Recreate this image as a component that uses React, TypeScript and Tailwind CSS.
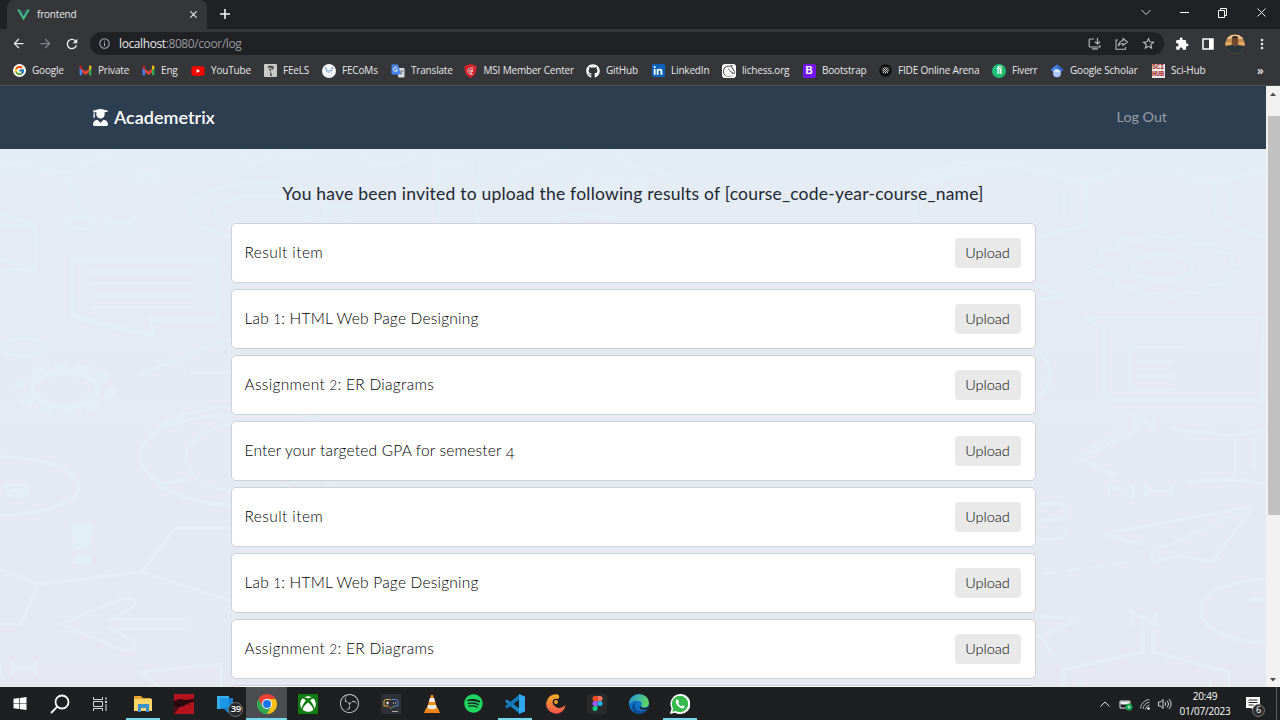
import type { ReactNode } from "react";
import { FaUserGraduate, FaYoutube, FaGithub, FaLinkedinIn, FaXbox, FaSpotify } from "react-icons/fa";
import { FcGoogle } from "react-icons/fc";
import { SiLichess, SiObsstudio } from "react-icons/si";
import { MdExtension, MdStarBorder, MdMoreVert, MdArrowBack, MdArrowForward, MdRefresh } from "react-icons/md";

const Gmail = () => (
  <svg viewBox="1 3 22 18" className="h-[11px] w-[13px]">
    <path d="M2 20V6l4 3v11z" fill="#4285f4" />
    <path d="M18 20V9l4-3v14z" fill="#34a853" />
    <path d="M6 9v6l6 4.500 6-4.500V9l-6 4.500z" fill="#ea4335" />
    <path d="M2 6c0-3 3-3 4-2v7L2 8z" fill="#c5221f" />
    <path d="M22 6c0-3-3-3-4-2v7l4-3z" fill="#fbbc04" />
  </svg>
);

const Feels = () => (
  <svg viewBox="0 0 13 13" className="h-[13px] w-[13px]">
    <rect width="13" height="13" rx="1" fill="#c9c9c7" />
    <path d="M3 3l3-1.500 4 1-1 3-2 .5v2l1 4H6L6.500 7l-2-2z" fill="#4b4b4b" />
    <path d="M2 3l3 2M5 4l3 1" stroke="#eee" strokeWidth=".8" />
  </svg>
);

const Fecoms = () => (
  <svg viewBox="0 0 14 14" className="h-3.5 w-3.5">
    <circle cx="7" cy="7" r="7" fill="#f4f7fc" />
    <path d="M3 3.800l1.500 1M11 3.800l-1.500 1M4 7l1.500-1M10 7L8.500 6" stroke="#4e7fc4" strokeWidth="1.200" />
    <circle cx="7" cy="7.500" r="1.800" fill="#b9cdea" />
  </svg>
);

const Translate = () => (
  <svg viewBox="0 0 14 14" className="h-3.5 w-3.5">
    <path d="M5 4h7.500a1 1 0 011 1v7.500a1 1 0 01-1 1H7.500z" fill="#dadce0" />
    <path d="M1.500.5H7l3 10H1.500a1 1 0 01-1-1v-8a1 1 0 011-1z" fill="#4a84ee" />
    <path d="M6.200 4.200A2 2 0 106.500 6H4.800" stroke="#fff" fill="none" strokeWidth=".9" />
    <path d="M9 7h3.500M11 6v1c0 1-1 2.500-2 3m.5-2l2.500 2.500" stroke="#6b7076" fill="none" strokeWidth=".8" />
  </svg>
);

const Msi = () => (
  <svg viewBox="0 0 13 14" className="h-3.5 w-[13px]">
    <path d="M6.500 0L12.500 2c0 6-1 9-6 12C1.500 11 .5 8 .5 2z" fill="#d5262f" />
    <path d="M9 3.500L5 4.500 3.500 7 5 9.500l3.500 1-2-2L9 7H5.500L9 5.500" fill="none" stroke="#f7dada" strokeWidth=".9" />
  </svg>
);

const LinkedIn = () => (
  <span className="flex h-[13px] w-[13px] items-center justify-center rounded-[1px] bg-[#0a62b8] text-[10px] text-white">
    <FaLinkedinIn />
  </span>
);

const Lichess = () => (
  <span className="flex h-3.5 w-3.5 items-center justify-center rounded-[3px] bg-white text-[12px] text-[#222]">
    <SiLichess />
  </span>
);

const Bootstrap = () => (
  <span className="flex h-3.5 w-[13px] items-center justify-center rounded-[2px] bg-[#7216f4] font-['Liberation_Sans',sans-serif] text-[10px] leading-none font-bold text-white">
    B
  </span>
);

const Fide = () => (
  <svg viewBox="0 0 14 14" className="h-[13px] w-[13px]">
    <circle cx="7" cy="7" r="6.800" fill="#101010" />
    <path d="M4 4l6 6M10 4l-6 6M6 3.500L10.500 8M3.500 6L8 10.500M8 3.500L3.500 8M10.500 6L6 10.500" stroke="#f2f2f2" strokeWidth="1" strokeDasharray="1.600 .6" />
  </svg>
);

const Fiverr = () => (
  <span className="flex h-3.5 w-3.5 items-center justify-center rounded-full bg-[#1dbf73] font-['Liberation_Sans',sans-serif] text-[10px] leading-none font-bold tracking-[-0.5px] text-white">
    fi
  </span>
);

const Scholar = () => (
  <svg viewBox="0 0 14 14" className="h-3.5 w-3.5">
    <path d="M7 .5l6.500 5.200L7 11 .5 5.700z" fill="#4a86ee" />
    <path d="M7 .5l6.500 5.200L7 11z" fill="#3569c8" />
    <circle cx="7" cy="9.200" r="4" fill="#a9c8fb" />
    <path d="M3.400 7.800a4 4 0 017.200 0z" fill="#e8f0fe" />
  </svg>
);

const SciHub = () => (
  <span className="flex h-3.5 w-[13px] flex-col items-center justify-center bg-[#f3e6e6] font-['Liberation_Mono',monospace] text-[7px] leading-[7px] font-bold text-[#a02a2a]">
    <span>SCI</span>
    <span>HUB</span>
  </span>
);

const bookmarks: { name: string; width: string; icon: ReactNode }[] = [
  { name: "Google", width: "w-[66px]", icon: <span className="rounded-full bg-white p-px"><FcGoogle className="h-[11px] w-[11px]" /></span> },
  { name: "Private", width: "w-[63px]", icon: <Gmail /> },
  { name: "Eng", width: "w-[50px]", icon: <Gmail /> },
  { name: "YouTube", width: "w-[72px]", icon: <FaYoutube className="h-3.5 w-3.5 text-[#ff0000] [background:linear-gradient(#fff,#fff)_center/5px_5px_no-repeat]" /> },
  { name: "FEeLS", width: "w-[59px]", icon: <Feels /> },
  { name: "FECoMs", width: "w-[69px]", icon: <Fecoms /> },
  { name: "Translate", width: "w-[72.500px]", icon: <Translate /> },
  { name: "MSI Member Center", width: "w-[122.500px]", icon: <Msi /> },
  { name: "GitHub", width: "w-[65px]", icon: <FaGithub className="h-3.5 w-3.5 text-white" /> },
  { name: "LinkedIn", width: "w-[71px]", icon: <LinkedIn /> },
  { name: "lichess.org", width: "w-[80px]", icon: <Lichess /> },
  { name: "Bootstrap", width: "w-[76px]", icon: <Bootstrap /> },
  { name: "FIDE Online Arena", width: "w-[114px]", icon: <Fide /> },
  { name: "Fiverr", width: "w-[58px]", icon: <Fiverr /> },
  { name: "Google Scholar", width: "w-[101px]", icon: <Scholar /> },
  { name: "Sci-Hub", width: "w-[106px]", icon: <SciHub /> },
];

function TabStrip() {
  return (
    <div className="flex h-[29px] items-stretch bg-[#202124] text-[#e8eaed]">
      <div className="ml-[7px] flex w-[200px] items-center rounded-t-[7px] bg-[#35363a] pl-2.5">
        <svg viewBox="0 0 14 12" className="h-3 w-[13px]">
          <path d="M0 0h3l4 7 4-7h3L7 12z" fill="#41b883" />
          <path d="M3 0h2.500L7 2.700 8.500 0H11L7 7z" fill="#35495e" />
        </svg>
        <span className="ml-[7px] text-[10px] tracking-[-0.2px]">frontend</span>
        <svg viewBox="0 0 8 8" className="mr-2.5 ml-auto h-[7px] w-[7px]" stroke="#f1f3f4" strokeWidth="1.200">
          <path d="M.5.5l7 7M7.500.5l-7 7" />
        </svg>
      </div>
      <svg viewBox="0 0 10 10" className="mb-px ml-[13px] h-2.5 w-2.5 self-center" stroke="#f1f3f4" strokeWidth="1.600">
        <path d="M5 0v10M0 5h10" />
      </svg>
      <svg viewBox="0 0 128 12" className="mr-3.5 mb-[5px] ml-auto h-3 w-32 self-center" fill="none" stroke="#e8eaed">
        <path d="M3.500 4L8 8.500 12.500 4" strokeWidth=".9" />
        <path d="M42 6.500h9" stroke="#fff" />
        <path d="M80.500 4.500h6v7h-6zM82.500 4.500v-2h6v7h-2" stroke="#fff" />
        <path d="M119.500 2.500l8 8M127.500 2.500l-8 8" />
      </svg>
    </div>
  );
}

function Toolbar() {
  return (
    <div className="flex h-[29px] items-center bg-[#35363a] text-[#e8eaed]">
      <MdArrowBack className="ml-[11px] h-[15px] w-[15px]" />
      <MdArrowForward className="ml-[12px] h-[15px] w-[15px] text-[#83858a]" />
      <MdRefresh className="ml-[11px] h-4 w-4" />
      <div className="ml-[10px] flex h-[23px] w-[1074px] items-center rounded-full bg-[#202124] pr-2 pl-[9px]">
        <svg viewBox="0 0 12 12" className="h-[11px] w-[11px]" fill="none" stroke="#a9adb2">
          <circle cx="6" cy="6" r="5.200" strokeWidth="1.100" />
          <path d="M6 5.300v3.500M6 3v1.200" strokeWidth="1.200" />
        </svg>
        <span className="ml-[9px] text-[12px] tracking-[-0.4px] text-[#989ba0]">
          <span className="text-[#e8eaed]">localhost</span>:8080/coor/log
        </span>
        <svg viewBox="0 0 14 12" className="ml-auto h-3 w-[14px]" fill="none" stroke="#b4b7bb" strokeWidth="1.200">
          <path d="M6 1H2.200a1 1 0 00-1 1v6a1 1 0 001 1H12V7M9.500 0v6M7 3.700L9.500 6 12 3.700M4 10.800h6" />
        </svg>
        <svg viewBox="0 0 14 13" className="ml-[13px] h-[13px] w-[14px]" fill="none" stroke="#b4b7bb" strokeWidth="1.100">
          <path d="M3 3H1v9.300h9.500V10M8 1.500L12.500 5 8 8.500V6.500C5.500 6.500 4 7.500 3.300 9 3.500 6 5 4 8 3.700z" />
        </svg>
        <MdStarBorder className="ml-[12px] h-[15px] w-[15px] text-[#c8cacd]" />
      </div>
      <MdExtension className="ml-[11px] h-[14px] w-[14px] text-white" />
      <svg viewBox="0 0 12 12" className="ml-[13px] h-3 w-3">
        <path d="M1 1h10v10H1z" fill="none" stroke="#fff" strokeWidth="1.500" />
        <path d="M7 1h4v10H7z" fill="#fff" />
      </svg>
      <svg viewBox="0 0 20 20" className="ml-[11px] h-5 w-5">
        <defs>
          <clipPath id="avatar"><circle cx="10" cy="10" r="9.700" /></clipPath>
        </defs>
        <g clipPath="url(#avatar)">
          <path d="M0 0h20v20H0z" fill="#c28a55" />
          <path d="M0 1h20v4H0z" fill="#eac38c" />
          <path d="M0 8h6v4H0zM14 8h6v4h-6z" fill="#e9a95b" />
          <path d="M0 12l7-1h6l7 1v8H0z" fill="#26363a" />
          <path d="M7 5c0-3 6-3 6 0v5l-3 3-3-3z" fill="#70462c" />
          <path d="M6.500 5c0-4 7-4 7 0l-1-1h-5z" fill="#2b211c" />
        </g>
      </svg>
      <MdMoreVert className="ml-[9px] h-4 w-4" />
    </div>
  );
}

function Bookmarks() {
  return (
    <div className="flex h-7 items-center border-b border-[#4c4f54] bg-[#35363a] pb-[2px] pl-3 text-[10px] tracking-[-0.18px] text-[#e8eaed]">
      {bookmarks.map((b) => (
        <div key={b.name} className={"flex shrink-0 items-center whitespace-nowrap " + b.width}>
          <span className="mr-1.5 flex w-3.5 shrink-0 justify-center">{b.icon}</span>
          {b.name}
        </div>
      ))}
      <span className="text-[12px] leading-none font-semibold">»</span>
    </div>
  );
}

function Doodles() {
  return (
    <svg viewBox="0 149 1266 538" className="absolute inset-0 h-full w-full" fill="none" stroke="#e3eef5" strokeWidth="3.500">
      <path d="M0 162l65 11 52-24M66 176l16 36M0 214l35 12v44H0M0 226h35M0 258l35 12" />
      <g strokeWidth="4">
        <ellipse cx="80" cy="223" rx="14" ry="6.500" />
        <path d="M108 216v14M134 216v14M108 223h26" />
        <ellipse cx="255" cy="154" rx="14" ry="7" />
        <path d="M284 149v13M309 149v13M284 155h25" />
        <path d="M1109 497v-12l24 12v-12M1146 485v12M1172 485v12M1146 491h26" />
        <path d="M1134 430v-14l20 14v-14M1132 625v-13l24 13v-13" />
        <path d="M12 662v13M36 662v13M12 668h24M0 662v13" />
        <path d="M561 177v12M561 171v3M588 178c-14-4-14 11 0 9M589 170v19M601 182h20c0-6-18-7-19 1 0 7 14 6 18 4M646 178v11M645 182c-16-7-18 8-1 5" />
        <path d="M27 486v10M2 487c16-4 25-2 25 2M26 491c-10-2-18-1-18 2s12 4 18 0M1250 600c12-3 16 0 16 2" />
      </g>
      <path d="M136 168l28 15M164 168l-32 15" />
      <ellipse cx="260" cy="211" rx="70" ry="28" />
      <ellipse cx="262" cy="213" rx="47" ry="17" />
      <path d="M325 224v-17h24v17" />
      <path d="M72 260h146v60h-67l2 15-27-5-53-14z" strokeWidth="5" />
      <path d="M90 272h104M90 283h104M96 296h98M90 307h104" />
      <ellipse cx="24" cy="347" rx="22" ry="9" />
      <ellipse cx="65" cy="389" rx="33" ry="17" strokeWidth="6" />
      <ellipse cx="65" cy="389" rx="46" ry="22" strokeWidth="8" strokeDasharray="12 10" />
      <path d="M140 375l90-37M190 373h40M150 433c30-14 55-17 85-19" />
      <ellipse cx="245" cy="456" rx="104" ry="50" />
      <ellipse cx="248" cy="458" rx="62" ry="35" />
      <path d="M157 485l32-6" />
      <ellipse cx="0" cy="486" rx="79" ry="29" />
      <path d="M70 524h23l-4 26H75zM74 556h16v8H74z" fill="#e2eff6" stroke="none" />
      <path d="M0 570l38 14-17 40H0M38 584l104-12 33-44h60M142 572l92 30v80" stroke="#e6edf5" />
      <path d="M61 624l55-23c12-6 26 0 16 6l-20 12h74c5 0 5 10 0 10h-74l19 12c12 7-1 13-13 7z" strokeWidth="3" stroke="#e6edf5" />
      <path d="M140 671l81-6v22M140 671l20 16" stroke="#e6edf5" />
      <path d="M361 149c4 21 50 20 54 0M439 149v18h25M439 164v59M480 149l-3 75M512 185c-8-18 15-22 35-25 30-25 80-15 83 8 25-2 50 6 43 23M550 222l20-8 48 4" />
      <path d="M915 223v-41l81-22 90 23v42l-53 13M1086 182l36-11M1170 171l42 12 54-13M1215 184v35l51 19M1064 188v33M1231 186v29M915 176l65-17M930 182l65-17" />
      <path d="M1090 267l12-8-2-10 17-1 5-10 18 3 12-7 17 5 15-4 10 9 19-1 5 9 17 1-4 9 11 7-14 5v10l-18 1-6 9-18-2-12 6-14-5-17 3-7-8-20-2 1-10-17-4z" strokeWidth="3" />
      <ellipse cx="1162" cy="267" rx="30" ry="13" />
      <path d="M1085 318h178v77c0 3-4 5-8 5h-136c-10 0-15-5-15-10v-60zM1130 390v-43h54M1136 362h37M1136 376h37M1130 390h45" />
      <path d="M1035 284l29 12-29 4M1035 350c20 10 20 38 0 48" />
      <g stroke="#e5edf5">
        <path d="M1140 428l-60 30 37 18M1080 455l40-24M1170 429l65 7 31-7M1235 438v41l-48 3M1235 479l31 5M1254 440v28" />
        <path d="M1104 534l150-28-42 56-33-7-24 7c-10-8 2-16 18-18l81-38M1104 534l40 11" strokeWidth="3" />
        <path d="M1043 574l90-13" strokeWidth="3" strokeDasharray="14 10" />
        <path d="M1035 506c20-5 32-4 32 8 0 8-20 4-32 8M1067 530c0 12-20 10-32 8" />
        <ellipse cx="1270" cy="611" rx="69" ry="32" />
        <path d="M1035 616l45 3-40 17 14 20M1063 687v-17l80-18v-22M1153 630v22l76 20v15M1080 687v-6M1210 687v-7" />
      </g>
    </svg>
  );
}

const SmallDigit = ({ children }: { children: string }) => <span className="text-[13px] leading-none">{children}</span>;

const labels: Record<string, ReactNode> = {
  result: <span className="tracking-[0.4px]">Result item</span>,
  lab: <span className="tracking-[0.21px]">Lab <SmallDigit>1</SmallDigit>: HTML Web Page Designing</span>,
  assignment: <span className="tracking-[0.3px]">Assignment <SmallDigit>2</SmallDigit>: ER Diagrams</span>,
  gpa: <span className="tracking-[0.18px]">Enter your targeted GPA for semester <span className="inline-block translate-y-[3px] leading-none">4</span></span>,
};

const rows = ["result", "lab", "assignment", "gpa", "result", "lab", "assignment"];

function Page() {
  return (
    <div className="flex h-[601px]">
      <main className="flex w-[1266px] flex-col overflow-hidden font-['Lato','Liberation_Sans',sans-serif]">
        <header className="flex h-[63px] shrink-0 items-center justify-between bg-[#2d3e50] pr-[99px] pb-px pl-[92px]">
          <div className="flex items-center gap-[5px] text-white">
            <FaUserGraduate className="h-[17px] w-[17px]" />
            <span className="text-[18px] font-semibold">Academetrix</span>
          </div>
          <span className="text-[14.300px] text-[#989fa6]">Log Out</span>
        </header>
        <div className="relative flex min-h-0 grow flex-col items-center overflow-hidden bg-linear-to-b from-[#e4ecf4] to-[#e5e8f1]">
          <Doodles />
          <h1 className="relative mt-[33px] h-[41px] shrink-0 text-[17.500px] leading-6 tracking-[0.21px] whitespace-nowrap text-[#212832]">
            You have been invited to upload the following results of [course_code-year-course_name]
          </h1>
          <div className="relative flex w-[805px] shrink-0 flex-col gap-1.5">
            {rows.map((row, i) => (
              <section key={i} className="flex h-[60px] shrink-0 items-center justify-between rounded-[5px] border border-[#cdd2d8] bg-white pr-3.5 pl-[13px] text-[15.500px] font-light text-black">
                <div className="pb-px">{labels[row]}</div>
                <button className="flex h-[30px] w-[66px] items-center justify-center rounded-[4px] bg-[#e9e9e9] text-[14.500px]">Upload</button>
              </section>
            ))}
            <div className="h-[60px] shrink-0 rounded-[5px] border border-[#cdd2d8] bg-white" />
          </div>
        </div>
      </main>
      <div className="flex w-3.5 flex-col items-center bg-[#f1f1f1]">
        <svg viewBox="0 0 14 30" className="h-[30px] w-3.5"><path d="M4 10h6L7 6.500z" fill="#505050" /></svg>
        <div className="h-[399px] w-3 self-end bg-[#c1c1c1]" />
        <svg viewBox="0 0 14 12" className="mt-auto h-3 w-3.5"><path d="M4 3h6L7 6.500z" fill="#505050" /></svg>
      </div>
    </div>
  );
}

const Explorer = () => (
  <svg viewBox="0 0 20 18" className="h-[18px] w-5">
    <path d="M1 1h7l2 2h8v4H1z" fill="#e5a52c" />
    <path d="M1 4h18v12H1z" fill="#fcd667" />
    <path d="M5 17V9h11v8h-3v-4H8v4z" fill="#3d8fd1" />
  </svg>
);

const Dragon = () => (
  <svg viewBox="0 0 20 20" className="h-5 w-5">
    <path d="M0 0h20v20H0z" fill="#b5121f" />
    <path d="M0 7l6-2 6 1 8-1v3l-6 1 3 2-4-1-3 2-5 1-5 5z" fill="#260a10" />
    <path d="M0 12l6 1-6 7z" fill="#4f0f1b" />
  </svg>
);

const Phone = () => (
  <span className="relative">
    <svg viewBox="0 0 18 18" className="h-[18px] w-[18px]">
      <path d="M1 1h12v13H1z" fill="#36b0ec" />
      <path d="M4 3h13v11l-5 4-4-4H4z" fill="#147fd0" />
      <path d="M4 3h9v10H4z" fill="#1c97e3" />
    </svg>
    <span className="absolute top-[7px] left-[12px] flex h-[15px] w-[15px] items-center justify-center rounded-full border border-[#777] bg-[#24282b] text-[9.500px] font-semibold tracking-[-0.3px] text-white">39</span>
  </span>
);

const Chrome = () => (
  <svg viewBox="0 0 20 20" className="h-5 w-5">
    <path d="M10 10L1.340 5A10 10 0 0118.660 5z" fill="#ea4335" />
    <path d="M10 10l8.660-5A10 10 0 0110 20z" fill="#fbc116" />
    <path d="M10 10v10A10 10 0 011.340 5z" fill="#34a853" />
    <path d="M10 5h8.660L14 12.500z" fill="#fbc116" />
    <path d="M14.300 12.500L10 20l-3-6z" fill="#34a853" />
    <path d="M1.340 5l4.300 7.500L10 5z" fill="#ea4335" />
    <path d="M1.340 5l4.300 7.500L8 14l2 6A10 10 0 011.340 5z" fill="#34a853" />
    <circle cx="10" cy="10" r="5" fill="#fff" />
    <circle cx="10" cy="10" r="4" fill="#1a73e8" />
  </svg>
);

const Pad = () => (
  <svg viewBox="0 0 20 20" className="h-5 w-5">
    <path d="M0 0h20v20H0z" fill="#303136" />
    <path d="M9.500 5.500h-5L3 7v5h4" fill="none" stroke="#e8b33b" />
    <path d="M10.500 5.500h5L17 7v5h-4" fill="none" stroke="#4a89de" />
    <path d="M7 12l3 2.500" fill="none" stroke="#d9544a" />
    <path d="M10 14.500l3-2.500" fill="none" stroke="#51a85b" />
    <path d="M5 9h3M6.500 7.500v3M12 9h1M14 9h1" stroke="#eee" />
    <path d="M11 17.500h6" stroke="#aaa" />
  </svg>
);

const Vlc = () => (
  <svg viewBox="0 0 18 20" className="h-5 w-[18px]">
    <path d="M3 14h12l2 5H1z" fill="#f08316" />
    <path d="M8 1h2l4.500 14c-2 2-9 2-11 0z" fill="#f58a1c" />
    <path d="M7 4h4l1.200 4H5.800zM5 11h8l.8 3c-2 1.500-7.600 1.500-9.600 0z" fill="#e9ecee" />
  </svg>
);

const VsCode = () => (
  <svg viewBox="0 0 20 20" className="h-5 w-5">
    <path d="M0 7l2-1.500L15 15v5L1 8.500z" fill="#1c83c9" />
    <path d="M0 13l2 1.500L15 5V0L1 11.500z" fill="#1279bd" />
    <path d="M14 0l6 2.500v15L14 20z" fill="#2fa8ef" />
  </svg>
);

const Comet = () => (
  <svg viewBox="0 0 20 20" className="h-5 w-5">
    <defs>
      <linearGradient id="comet" x1="0" y1="0" x2="0" y2="1">
        <stop stopColor="#fbb022" /><stop offset="1" stopColor="#f4504c" />
      </linearGradient>
    </defs>
    <path d="M12 .5A9.700 9.700 0 1019.500 11c-4 3.500-9 4-11 .5-2 0-3-6 1.500-6.500 3 0 4.500-2 2-4.500z" fill="url(#comet)" />
    <circle cx="10" cy="8" r="3.300" fill="#202020" />
    <circle cx="10" cy="8" r="1.900" fill="#f8a329" />
  </svg>
);

const Figma = () => (
  <span className="flex h-5 w-5 items-center justify-center rounded-[2px] bg-[#2a2a2a]">
    <svg viewBox="0 0 12 18" className="h-[15px] w-[11px]">
      <path d="M6 0H3a3 3 0 000 6h3z" fill="#f24e1e" />
      <path d="M6 0h3a3 3 0 010 6H6z" fill="#ff7262" />
      <path d="M6 6H3a3 3 0 000 6h3z" fill="#a259ff" />
      <circle cx="9" cy="9" r="3" fill="#1abcfe" />
      <path d="M6 12H3a3 3 0 103 3z" fill="#0acf83" />
    </svg>
  </span>
);

const Edge = () => (
  <svg viewBox="0 0 20 20" className="h-5 w-5">
    <defs>
      <linearGradient id="edge" x1="0" y1="0" x2="1" y2=".3">
        <stop stopColor="#2294dd" /><stop offset="1" stopColor="#5bd36a" />
      </linearGradient>
    </defs>
    <circle cx="10" cy="10" r="10" fill="#1272c4" />
    <path d="M0 9C1-2 19-3 20 9c0 5-6 5-8 3 2-3 0-5-3-5C5 6 1 8 0 11z" fill="url(#edge)" />
    <path d="M7 8c-3 4 0 9 5 9 3 0 5-1 6-2-3 6-10 6-13 3S2 9 9 7z" fill="#0c4c94" />
    <path d="M11 12c2 3 6 3 9 0l-1.500 3c-4 2-9 0-7.500-3z" fill="#202020" />
  </svg>
);

const WhatsApp = () => (
  <svg viewBox="0 0 20 20" className="h-5 w-5">
    <path d="M0 20l1.500-5.500A10 10 0 1110 20c-2 0-3.500-.5-5-1.300z" fill="#fff" />
    <circle cx="10" cy="10" r="8.200" fill="#34b94a" />
    <path d="M2.300 17.700l1-4 3 3z" fill="#34b94a" />
    <path d="M6.500 5.500C5 7 6 10 8 12s5 3.300 6.500 1.500c.7-1-.2-1.400-1.800-2.200-.8-.2-1 .8-1.500.9-1.200-.3-2.500-1.600-2.900-2.700 0-.5.9-.7.7-1.300-.7-1.900-1-3.300-2.500-2.700z" fill="#fff" />
  </svg>
);

const apps: { id: string; icon: ReactNode; open?: boolean; active?: boolean }[] = [
  { id: "explorer", icon: <Explorer />, open: true },
  { id: "dragon", icon: <Dragon /> },
  { id: "phone", icon: <Phone /> },
  { id: "chrome", icon: <Chrome />, active: true },
  { id: "xbox", icon: <span className="flex h-5 w-5 items-center justify-center bg-[#107c10] text-[16px] text-white"><FaXbox /></span> },
  { id: "obs", icon: <SiObsstudio className="h-[19px] w-[19px] text-[#c9c9cb]" /> },
  { id: "pad", icon: <Pad /> },
  { id: "vlc", icon: <Vlc /> },
  { id: "spotify", icon: <FaSpotify className="h-[19px] w-[19px] text-[#1ed760]" /> },
  { id: "vscode", icon: <VsCode />, open: true },
  { id: "comet", icon: <Comet /> },
  { id: "figma", icon: <Figma /> },
  { id: "edge", icon: <Edge /> },
  { id: "whatsapp", icon: <WhatsApp />, open: true },
];

function Taskbar() {
  return (
    <div className="flex h-[33px] items-stretch bg-[#1d1f21] text-white">
      <div className="flex w-10 items-center justify-center">
        <svg viewBox="0 0 14 14" className="h-[13px] w-[14px]" fill="#fff">
          <path d="M0 2l6-.8v5.500H0zM6.700 1.100L14 0v6.700H6.700zM0 7.300h6v5.500L0 12zM6.700 7.300H14V14l-7.300-1.100z" />
        </svg>
      </div>
      <div className="flex w-10 items-center justify-center">
        <svg viewBox="0 0 20 20" className="h-5 w-5" fill="none" stroke="#fff" strokeWidth="1.800">
          <circle cx="12" cy="8" r="6.500" /><path d="M7.300 12.700L1 19" />
        </svg>
      </div>
      <div className="flex w-10 items-center justify-center">
        <svg viewBox="0 0 14 14" className="h-3.5 w-3.5" fill="none" stroke="#d8d8d8">
          <path d="M.5 0v2.500h9V0M.5 14v-2.500h9V14M.5 4.500h9v5h-9zM13 0v3M13 7v7" /><path d="M12 5h2" strokeWidth="2" />
        </svg>
      </div>
      <div className="ml-[2px] flex">
        {apps.map((app) => (
          <div key={app.id} className={"flex w-[41.330px] flex-col items-center " + (app.active ? "bg-[#4b4d50]" : "")}>
            <span className="flex h-[31px] items-center pt-0.5">{app.icon}</span>
            {app.open && <span className="h-0.5 w-[34px] bg-[#76d8ee]" />}
            {app.active && <span className="h-0.5 w-full bg-[#76d8ee]" />}
          </div>
        ))}
      </div>
      <div className="ml-auto flex items-center">
        <svg viewBox="0 0 74 16" className="h-4 w-[74px]" fill="none" stroke="#e8e8e8">
          <path d="M1.500 10.500L6 6l4.500 4.500" />
          <path d="M21 5h10v7H21z" /><path d="M22 6h8v2h-8z" fill="#fff" />
          <circle cx="30" cy="11" r="3.500" fill="#13a34a" stroke="none" /><path d="M28.500 11h3M30 9.500v3" stroke="#fff" strokeWidth=".8" />
          <path d="M41.500 12.500a9.500 9.500 0 019-9M44 13a8 8 0 016.500-6.800M46.500 13.500a5 5 0 014-4.500" strokeWidth="1" stroke="#bbb" /><circle cx="49.500" cy="12.500" r="1.200" fill="#fff" stroke="none" />
          <path d="M59.500 6h2L64 3.500v9L61.500 10h-2zM66 6a3 3 0 010 4M68 4.500a5 5 0 010 7M70 3a7 7 0 010 10" strokeWidth=".9" />
        </svg>
        <div className="ml-[6px] flex w-[52px] flex-col items-center text-[10px] leading-[15px] tracking-[-0.2px]">
          <span>20:49</span>
          <span>01/07/2023</span>
        </div>
        <span className="relative ml-[15px]">
          <svg viewBox="0 0 14 14" className="h-3.5 w-3.5"><path d="M0 0h14v11H8v3l-3-3H0z" fill="#fff" /><path d="M2.500 3h9M2.500 5.500h9M2.500 8h5" stroke="#222" /></svg>
          <span className="absolute top-[7px] left-[6px] flex h-[13px] w-[13px] items-center justify-center rounded-full border border-[#777] bg-[#2b2e31] text-[9px]">6</span>
        </span>
        <span className="mr-[3px] ml-[16px] h-[33px] w-px bg-[#5a5c5e]" />
      </div>
    </div>
  );
}

export default function App() {
  return (
    <div className="flex h-[720px] w-[1280px] flex-col overflow-hidden font-['Open_Sans','Noto_Sans',sans-serif]">
      <TabStrip />
      <Toolbar />
      <Bookmarks />
      <Page />
      <Taskbar />
    </div>
  );
}
